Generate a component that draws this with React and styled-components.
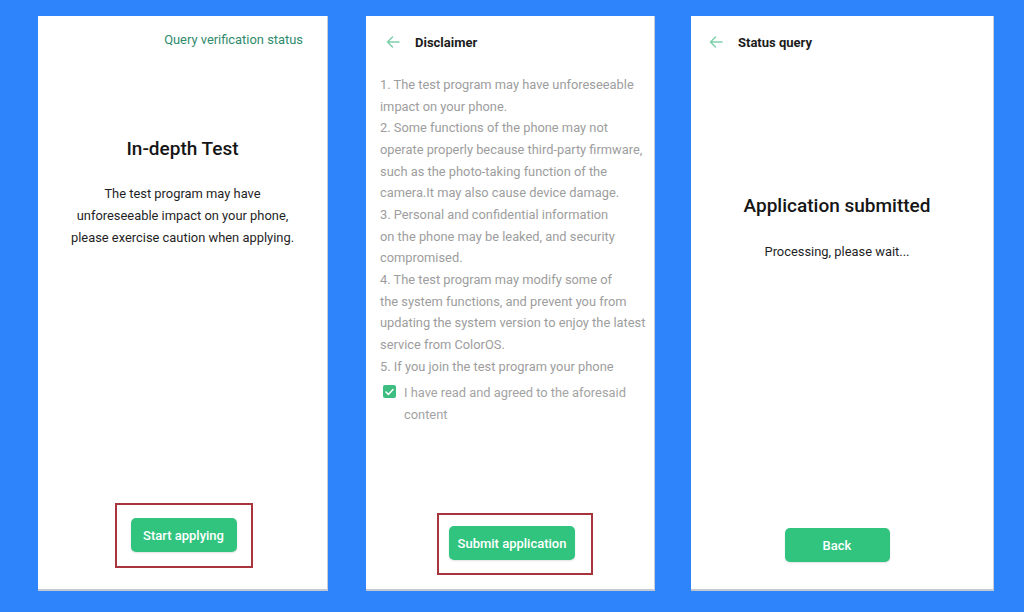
import React from "react";
import styled, { createGlobalStyle } from "styled-components";

const Global = createGlobalStyle`
  html, body { margin: 0; padding: 0; }
  body {
    background: #2e84fb;
    font-family: Roboto, "Noto Sans", "Liberation Sans", sans-serif;
    -webkit-font-smoothing: antialiased;
  }
`;

const Stage = styled.div`
  width: 1024px;
  height: 612px;
  box-sizing: border-box;
  padding: 16px 30px 0 38px;
  display: flex;
  align-items: flex-start;
  background: #2e84fb;
`;

const Panel = styled.div`
  width: ${(p) => p.$w}px;
  height: 575px;
  margin-right: ${(p) => p.$gap || 0}px;
  box-sizing: border-box;
  background: #fff;
  border-right: 1px solid #c9ced6;
  border-bottom: 2px solid #c4c9d1;
  display: flex;
  flex-direction: column;
  padding-right: ${(p) => p.$pr || 0}px;
`;

const TopLink = styled.div`
  align-self: flex-end;
  margin: 14px 24px 0 0;
  font-size: 12.9px;
  line-height: 20px;
  color: #2f8a6c;
`;

const NavBar = styled.div`
  display: flex;
  align-items: center;
  height: 20px;
  margin-top: 16px;
  padding-left: ${(p) => p.$pl}px;
  gap: ${(p) => p.$gap}px;
`;

const NavTitle = styled.div`
  font-size: 13px;
  font-weight: 700;
  color: #1c1c1c;
`;

const Title = styled.h1`
  margin: ${(p) => p.$mt}px 0 0;
  text-align: center;
  font-size: 19px;
  line-height: 26px;
  font-weight: 500;
  color: #151515;
`;

const Lead = styled.p`
  margin: ${(p) => p.$mt}px 0 0;
  text-align: center;
  font-size: 12.9px;
  line-height: 22px;
  color: #1f1f1f;
`;

const Terms = styled.div`
  margin-top: 22px;
  padding-left: 14px;
  font-size: 12.85px;
  line-height: 21.65px;
  color: #9d9d9d;
`;

const TermLine = styled.div`
  white-space: nowrap;
`;

const Agree = styled.div`
  display: flex;
  align-items: flex-start;
  gap: 8px;
  margin-top: 5px;
  padding-left: 17px;
  font-size: 12.85px;
  line-height: 22px;
  color: #a3a3a3;
`;

const Check = styled.span`
  flex: none;
  width: 13px;
  height: 13px;
  margin-top: 3px;
  border-radius: 2px;
  background: #3dbd80;
  display: flex;
  align-items: center;
  justify-content: center;
`;

const Bottom = styled.div`
  margin-top: auto;
  margin-bottom: ${(p) => p.$mb}px;
  align-self: center;
  transform: translateX(${(p) => p.$shift || 0}px);
`;

const Highlight = styled.div`
  border: 2px solid #a8343c;
  padding: ${(p) => p.$pad};
  display: flex;
`;

const Button = styled.button`
  width: ${(p) => p.$w}px;
  height: 34px;
  border: none;
  border-radius: 5px;
  background: #31c47f;
  color: #fff;
  font-family: inherit;
  font-size: 13px;
  font-weight: 500;
  box-shadow: 0 1px 2px rgba(0, 0, 0, 0.12);
  cursor: pointer;
`;

const BackArrow = () => (
  <svg width="14" height="12" viewBox="0 0 14 12" fill="none">
    <path d="M13 6H1.5M6.5 1L1.5 6l5 5" stroke="#7fcfaa" strokeWidth="1.5" strokeLinecap="round" strokeLinejoin="round" />
  </svg>
);

const terms = [
  "1. The test program may have unforeseeable",
  "impact on your phone.",
  "2. Some functions of the phone may not",
  "operate properly because third-party firmware,",
  "such as the photo-taking function of the",
  "camera.It may also cause device damage.",
  "3. Personal and confidential information",
  "on the phone may be leaked, and security",
  "compromised.",
  "4. The test program may modify some of",
  "the system functions, and prevent you from",
  "updating the system version to enjoy the latest",
  "service from ColorOS.",
  "5. If you join the test program your phone",
];

export default function App() {
  return (
    <>
      <Global />
      <Stage>
        <Panel $w={290} $gap={38}>
          <TopLink>Query verification status</TopLink>
          <Title $mt={86}>In-depth Test</Title>
          <Lead $mt={21}>
            The test program may have
            <br />
            unforeseeable impact on your phone,
            <br />
            please exercise caution when applying.
          </Lead>
          <Bottom $mb={21} $shift={1}>
            <Highlight $pad="13px 14px 14px">
              <Button $w={106}>Start applying</Button>
            </Highlight>
          </Bottom>
        </Panel>

        <Panel $w={289} $gap={36}>
          <NavBar $pl={20} $gap={15}>
            <BackArrow />
            <NavTitle>Disclaimer</NavTitle>
          </NavBar>
          <Terms>
            {terms.map((t) => (
              <TermLine key={t}>{t}</TermLine>
            ))}
          </Terms>
          <Agree>
            <Check>
              <svg width="9" height="8" viewBox="0 0 9 8" fill="none">
                <path d="M1 4l2.4 2.4L8 1.5" stroke="#fff" strokeWidth="1.5" strokeLinecap="round" strokeLinejoin="round" />
              </svg>
            </Check>
            <span>
              I have read and agreed to the aforesaid
              <br />
              content
            </span>
          </Agree>
          <Bottom $mb={14} $shift={5}>
            <Highlight $pad="11px 16px 13px 10px">
              <Button $w={126}>Submit application</Button>
            </Highlight>
          </Bottom>
        </Panel>

        <Panel $w={303} $pr={10}>
          <NavBar $pl={18} $gap={15}>
            <BackArrow />
            <NavTitle>Status query</NavTitle>
          </NavBar>
          <Title $mt={141}>Application submitted</Title>
          <Lead $mt={22}>Processing, please wait...</Lead>
          <Bottom $mb={27}>
            <Button $w={105}>Back</Button>
          </Bottom>
        </Panel>
      </Stage>
    </>
  );
}
